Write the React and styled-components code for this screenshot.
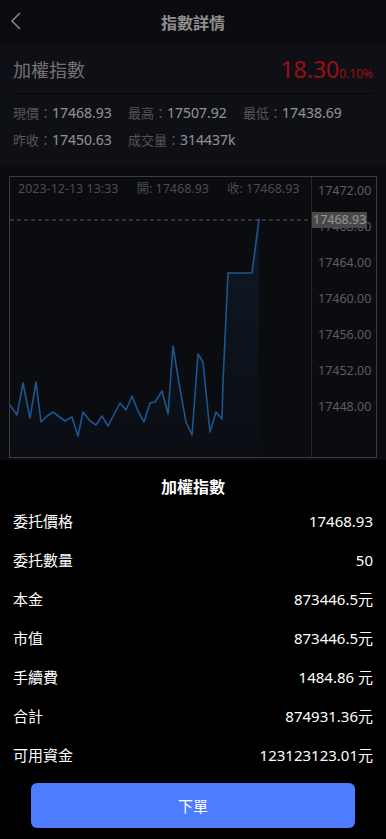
import React from 'react'
import styled, { createGlobalStyle } from 'styled-components';

const GlobalStyle = createGlobalStyle`
    * { box-sizing: border-box; }
    html, body {
        margin: 0;
        padding: 0;
        background: #12141b;
        font-family: "Noto Sans", "Noto Sans CJK TC", sans-serif;
    }
`;

const stats = [
    [['現價', '17468.93'], ['最高', '17507.92'], ['最低', '17438.69']],
    [['昨收', '17450.63'], ['成交量', '314437k']],
];

const axis = ['17472.00', '17468.00', '17464.00', '17460.00', '17456.00', '17452.00', '17448.00'];

const orderRows = [
    ['委托價格', '17468.93'],
    ['委托數量', '50'],
    ['本金', '873446.5元'],
    ['市值', '873446.5元'],
    ['手續費', '1484.86 元'],
    ['合計', '874931.36元'],
    ['可用資金', '123123123.01元'],
];

// screen coords of the line, shifted into the plot box
const raw = [
    [10, 406], [17, 416], [23, 384], [30, 419], [36, 383], [41, 423], [47, 417], [53, 413],
    [65, 422], [72, 418], [78, 437], [83, 413], [90, 422], [96, 426], [102, 417], [108, 427],
    [120, 404], [126, 411], [132, 397], [138, 412], [144, 423], [150, 404], [155, 403],
    [162, 392], [168, 415], [173, 347], [180, 390], [186, 423], [192, 436], [198, 355],
    [203, 363], [210, 433], [216, 413], [222, 420], [223, 383], [228, 274], [252, 274], [259, 220],
];
const pts = raw.map(([x, y]) => [x - 10, y - 178]);
const linePath = pts.map((p, i) => `${i ? 'L' : 'M'}${p[0]} ${p[1]}`).join(' ');
const areaPath = `${linePath} L${pts[pts.length - 1][0]} 280 L${pts[0][0]} 280 Z`;

function App() {
    return (
        <>
            <GlobalStyle />
            <Page>
                <Header>
                    <BackBtn>
                        <svg width="12" height="18" viewBox="0 0 12 18">
                            <path d="M10 1 L2 9 L10 17" fill="none" stroke="#dcdcdc" strokeWidth="1.6" />
                        </svg>
                    </BackBtn>
                    <h1>指數詳情</h1>
                </Header>
                <InfoCard>
                    <TitleRow>
                        <span className="name">加權指數</span>
                        <Price>18.30<small>0.10%</small></Price>
                    </TitleRow>
                    <Stats>
                        {stats.map((row, i) => (
                            <StatRow key={i}>
                                {row.map(([k, v]) => (
                                    <Stat key={k}><em>{k}：</em>{v}</Stat>
                                ))}
                            </StatRow>
                        ))}
                    </Stats>
                </InfoCard>
                <ChartBox>
                    <Plot>
                        <Legend>
                            <span>2023-12-13 13:33</span>
                            <span>開: 17468.93</span>
                            <span>收: 17468.93</span>
                        </Legend>
                        <svg width="301" height="280" viewBox="0 0 301 280">
                            <defs>
                                <linearGradient id="fill" x1="0" y1="0" x2="0" y2="1">
                                    <stop offset="0" stopColor="#2f8ff0" stopOpacity="0.18" />
                                    <stop offset="1" stopColor="#2f8ff0" stopOpacity="0.02" />
                                </linearGradient>
                            </defs>
                            <path d={areaPath} fill="url(#fill)" />
                            <path d={linePath} fill="none" stroke="#2f8ff0" strokeWidth="1.6" strokeLinejoin="round" />
                            <line x1="0" y1="43" x2="301" y2="43" stroke="#9a9a9a" strokeWidth="1" strokeDasharray="4 3" />
                        </svg>
                    </Plot>
                    <Axis>
                        {axis.map(a => <span key={a}>{a}</span>)}
                        <PriceTag>17468.93</PriceTag>
                    </Axis>
                </ChartBox>
            </Page>
            <Mask />
            <Sheet>
                <SheetTitle>加權指數</SheetTitle>
                <OrderList>
                    {orderRows.map(([k, v]) => (
                        <OrderRow key={k}>
                            <span>{k}</span>
                            <span>{v}</span>
                        </OrderRow>
                    ))}
                </OrderList>
                <SubmitBtn>下單</SubmitBtn>
            </Sheet>
        </>
    )
}

const Page = styled.div`
    min-height: 839px;
    background: #12141b;
    padding-bottom: 20px;
`;

const Header = styled.header`
    height: 44px;
    display: flex;
    align-items: center;
    justify-content: center;
    position: relative;
    h1 {
        margin: 0;
        font-size: 16px;
        font-weight: 700;
        color: #ececec;
    }
`;

const BackBtn = styled.div`
    position: absolute;
    left: 10px;
    top: 12px;
    display: flex;
`;

const InfoCard = styled.section`
    background: #1a1c24;
    padding: 0 13px 16px 13px;
`;

const TitleRow = styled.div`
    height: 50px;
    display: flex;
    align-items: center;
    justify-content: space-between;
    border-bottom: 1px solid #07080a;
    .name {
        font-size: 18px;
        color: #bcbcbc;
    }
`;

const Price = styled.span`
    font-size: 23px;
    color: #ff1428;
    display: flex;
    align-items: baseline;
    small {
        font-size: 12px;
    }
`;

const Stats = styled.div`
    padding-top: 8px;
    display: flex;
    flex-direction: column;
    gap: 7px;
`;

const StatRow = styled.div`
    display: grid;
    grid-template-columns: 115px 115px 1fr;
    height: 20px;
    align-items: center;
`;

const Stat = styled.span`
    font-size: 14px;
    color: #f0f0f0;
    white-space: nowrap;
    em {
        font-style: normal;
        font-size: 13px;
        color: #8c8c8c;
    }
`;

const ChartBox = styled.div`
    margin: 11px 9px 0 9px;
    height: 282px;
    border: 1px solid #666;
    display: grid;
    grid-template-columns: 301px 1fr;
    overflow: hidden;
`;

const Plot = styled.div`
    position: relative;
    svg { display: block; }
`;

const Legend = styled.div`
    position: absolute;
    top: 3px;
    left: 8px;
    display: flex;
    gap: 18px;
    font-size: 12.5px;
    line-height: 18px;
    color: #7e7e7e;
    white-space: nowrap;
`;

const Axis = styled.div`
    position: relative;
    border-left: 1px solid #444;
    padding: 5px 0 0 6px;
    display: flex;
    flex-direction: column;
    gap: 18px;
    span {
        height: 18px;
        line-height: 18px;
        font-size: 12.5px;
        color: #999;
        white-space: nowrap;
    }
`;

const PriceTag = styled.div`
    position: absolute;
    top: 35px;
    left: 0;
    height: 16px;
    padding: 0 1px;
    background: #7a7a7a;
    color: #f4f4f4;
    font-size: 12.5px;
    line-height: 16px;
`;

const Mask = styled.div`
    position: fixed;
    inset: 0;
    background: rgba(0, 0, 0, 0.4);
`;

const Sheet = styled.div`
    position: fixed;
    left: 0;
    right: 0;
    bottom: 0;
    height: 379px;
    background: #000;
    padding: 14px 13px 0 13px;
    display: flex;
    flex-direction: column;
`;

const SheetTitle = styled.div`
    text-align: center;
    font-size: 16px;
    font-weight: 700;
    color: #fff;
    line-height: 26px;
`;

const OrderList = styled.div`
    margin-top: 1px;
    display: flex;
    flex-direction: column;
`;

const OrderRow = styled.div`
    height: 39px;
    display: flex;
    align-items: center;
    justify-content: space-between;
    font-size: 15px;
    color: #fff;
`;

const SubmitBtn = styled.button`
    margin: 9px 18px 0 18px;
    height: 45px;
    border: none;
    border-radius: 6px;
    background: #4d7cfe;
    color: #fff;
    font-family: inherit;
    font-size: 15px;
`;

export default App;
